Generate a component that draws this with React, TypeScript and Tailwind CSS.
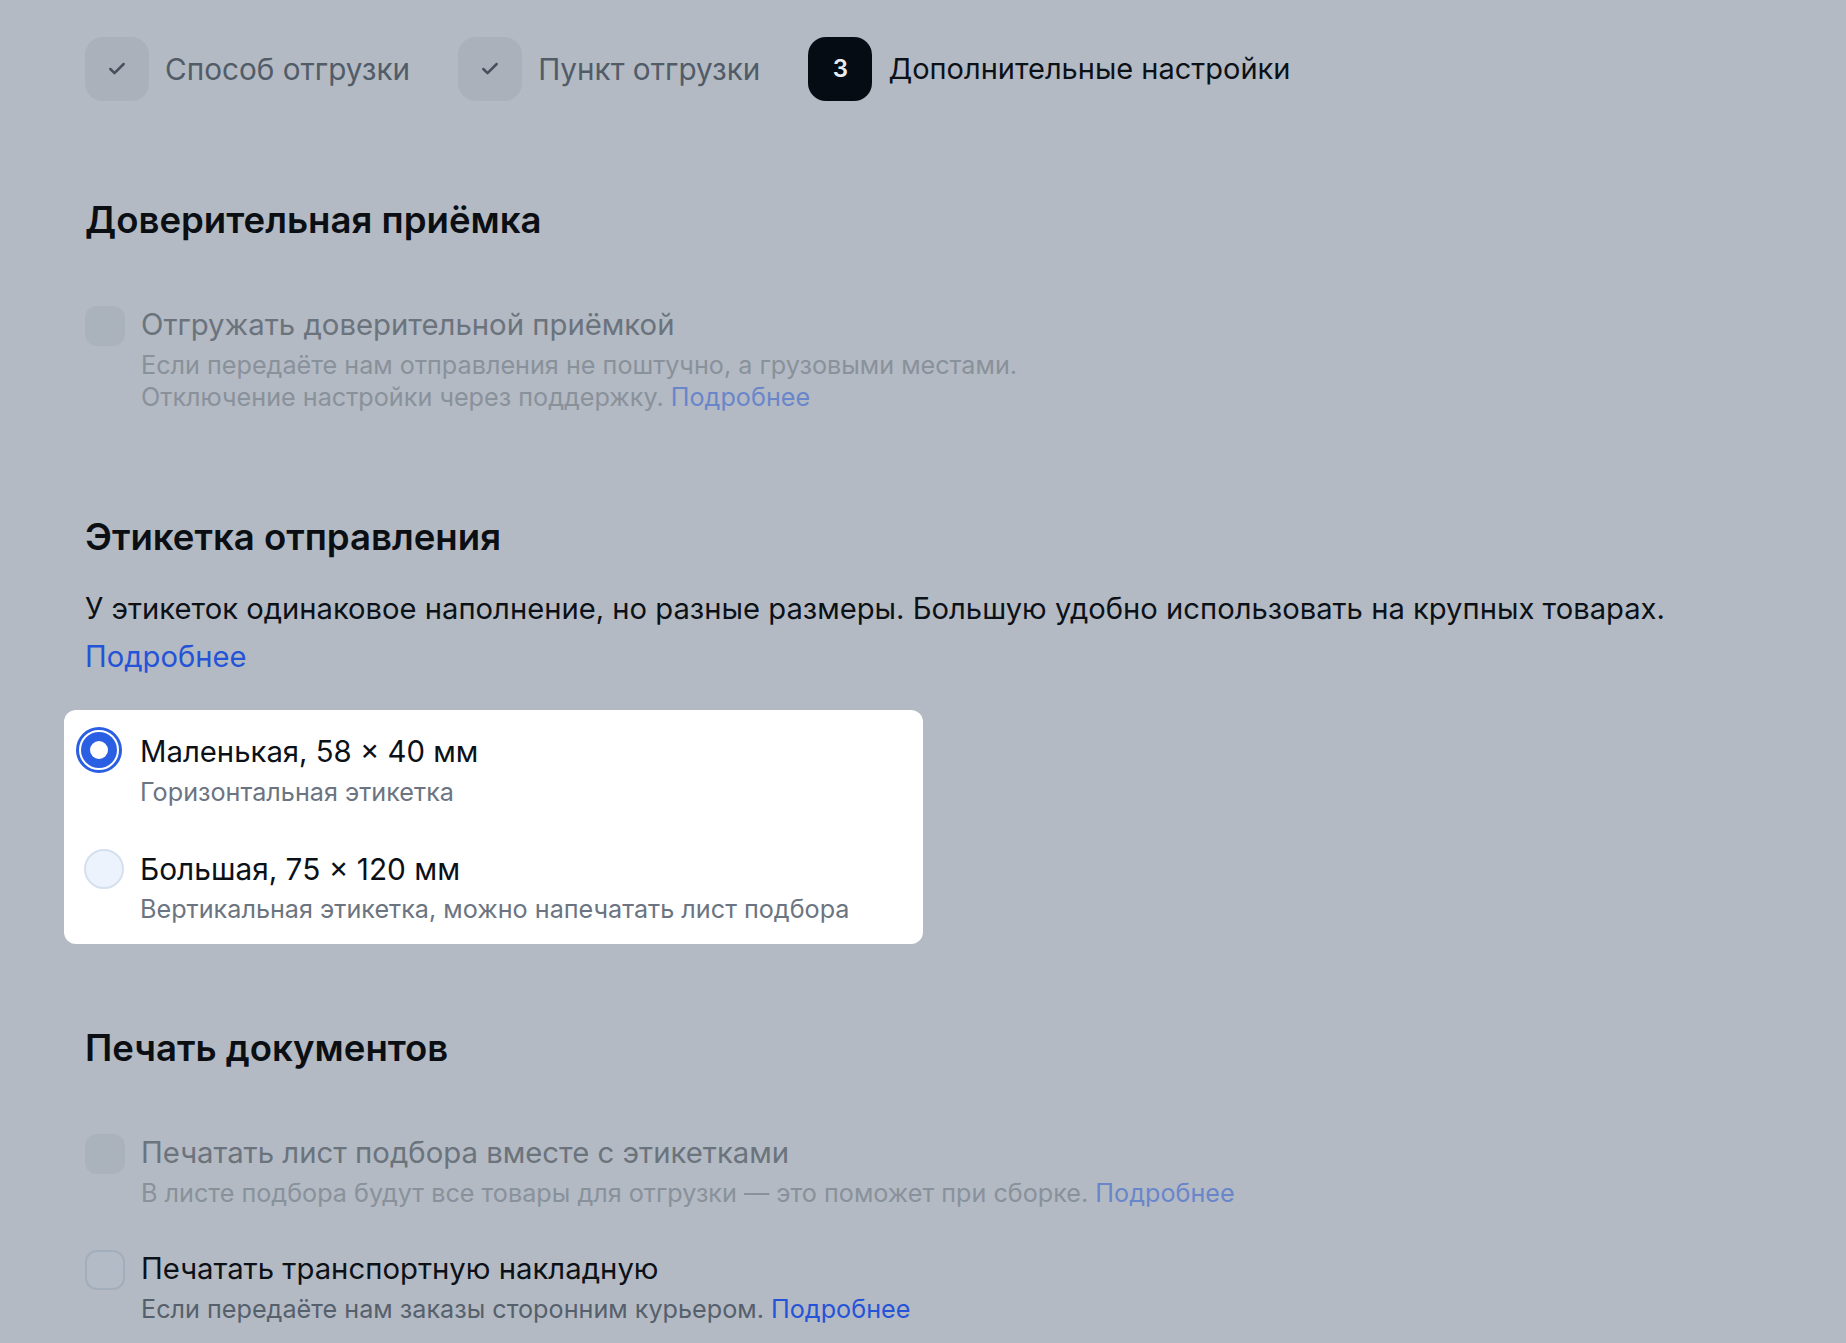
import { Check } from 'lucide-react'

const font = { fontFamily: 'Inter, "Noto Sans", sans-serif' }

interface StepProps {
  label: string
  num?: string
  active?: boolean
}

function Step({ label, num, active }: StepProps) {
  return (
    <div className="flex items-center gap-4">
      <div
        className={
          active
            ? 'flex h-16 w-16 items-center justify-center rounded-[18px] bg-[#050c14] text-[24px] font-semibold text-[#e8ecf1]'
            : 'flex h-16 w-16 items-center justify-center rounded-[18px] bg-[#aab1ba] text-[#46505c]'
        }
      >
        {num ? num : <Check className="h-5 w-5" strokeWidth={3} />}
      </div>
      <span
        className={
          active
            ? 'text-[29px] leading-10 text-[#0c1117]'
            : 'text-[29.7px] leading-10 text-[#525c68]'
        }
      >
        {label}
      </span>
    </div>
  )
}

interface OptionProps {
  label: string
  disabled?: boolean
  bordered?: boolean
  children: React.ReactNode
}

function CheckRow({ label, disabled, bordered, children }: OptionProps) {
  return (
    <div className="flex gap-4">
      <div
        className={
          bordered
            ? 'mt-px h-10 w-10 shrink-0 rounded-[12px] border-2 border-[#a3aebc] bg-[#b3bcc6]'
            : 'mt-px h-10 w-10 shrink-0 rounded-[12px] bg-[#aab2bc]'
        }
      />
      <div>
        <div
          className={
            disabled
              ? 'text-[29.3px] leading-10 text-[#6b737d]'
              : 'text-[29.3px] leading-10 text-[#0c1117]'
          }
        >
          {label}
        </div>
        <div
          className={
            disabled
              ? 'mt-1 text-[25.2px] leading-8 text-[#89919b]'
              : 'mt-1 text-[25.2px] leading-8 text-[#56606c]'
          }
        >
          {children}
        </div>
      </div>
    </div>
  )
}

export default function App() {
  return (
    <div className="min-h-[1343px] bg-[#b3bac3] pl-[85px] pt-[37px]" style={font}>
      <div className="flex items-center gap-12">
        <Step label="Способ отгрузки" />
        <Step label="Пункт отгрузки" />
        <Step label="Дополнительные настройки" num="3" active />
      </div>

      <h2 className="mt-[97px] text-[36.6px] font-semibold leading-[44px] text-[#0b0f14]">
        Доверительная приёмка
      </h2>
      <div className="mt-[63px]">
        <CheckRow label="Отгружать доверительной приёмкой" disabled>
          Если передаёте нам отправления не поштучно, а грузовыми местами.
          <br />
          Отключение настройки через поддержку.{' '}
          <span className="text-[#6a86cb]">Подробнее</span>
        </CheckRow>
      </div>

      <h2 className="mt-[102px] text-[36.6px] font-semibold leading-[44px] text-[#0b0f14]">
        Этикетка отправления
      </h2>
      <p className="mt-[26px] text-[29.2px] leading-[48px] text-[#0c1117]">
        У этикеток одинаковое наполнение, но разные размеры. Большую удобно использовать на крупных товарах.
        <br />
        <a className="text-[#2553d8]" href="#">
          Подробнее
        </a>
      </p>

      <div className="-ml-[21px] mt-[29px] w-[859px] rounded-xl bg-white pb-[19px] pl-[20px] pt-[22px]">
        <div className="flex gap-4">
          <div className="-ml-2 -mt-[5px] flex h-[46px] w-[46px] shrink-0 items-center justify-center rounded-full border-[3px] border-[#2b5fe3] bg-white">
            <div className="flex h-[36px] w-[36px] items-center justify-center rounded-full bg-[#2b5fe3]">
              <div className="h-[18px] w-[18px] rounded-full bg-white" />
            </div>
          </div>
          <div className="ml-[2px]">
            <div className="text-[29.3px] leading-10 text-[#0c1117]">Маленькая, 58 × 40 мм</div>
            <div className="mt-1 text-[25.2px] leading-8 text-[#6b7480]">Горизонтальная этикетка</div>
          </div>
        </div>
        <div className="mt-[41px] flex gap-4">
          <div className="h-10 w-10 shrink-0 rounded-full border-2 border-[#d5e0ee] bg-[#edf3fc]" />
          <div>
            <div className="text-[29.8px] leading-10 text-[#0c1117]">Большая, 75 × 120 мм</div>
            <div className="mt-1 text-[25.2px] leading-8 text-[#6b7480]">
              Вертикальная этикетка, можно напечатать лист подбора
            </div>
          </div>
        </div>
      </div>

      <h2 className="mt-[82px] text-[36.6px] font-semibold leading-[44px] text-[#0b0f14]">
        Печать документов
      </h2>
      <div className="mt-[63px]">
        <CheckRow label="Печатать лист подбора вместе с этикетками" disabled>
          В листе подбора будут все товары для отгрузки — это поможет при сборке.{' '}
          <span className="text-[#6a86cb]">Подробнее</span>
        </CheckRow>
      </div>
      <div className="mt-10">
        <CheckRow label="Печатать транспортную накладную" bordered>
          Если передаёте нам заказы сторонним курьером.{' '}
          <a className="text-[#2553d8]" href="#">
            Подробнее
          </a>
        </CheckRow>
      </div>
    </div>
  )
}
